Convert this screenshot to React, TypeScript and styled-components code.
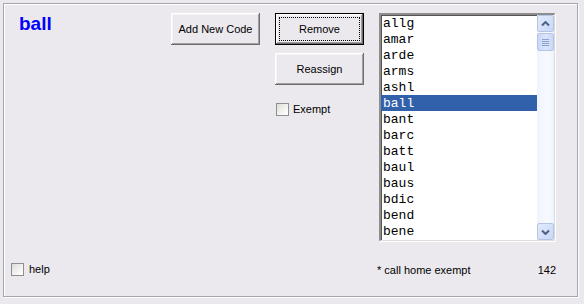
import React from 'react';
import styled, { createGlobalStyle } from 'styled-components';

const codes = [
  'allg', 'amar', 'arde', 'arms', 'ashl', 'ball', 'bant',
  'barc', 'batt', 'baul', 'baus', 'bdic', 'bend', 'bene',
];

const GlobalStyle = createGlobalStyle`
  html, body {
    margin: 0;
    padding: 0;
    background: #ebe9ed;
  }
  body {
    font-family: 'Liberation Sans', Arial, sans-serif;
    font-size: 11px;
    color: #000;
  }
`;

const Page = styled.div`
  width: 584px;
  height: 304px;
  padding: 3px;
  box-sizing: border-box;
  background: #ebe9ed;
`;

const Frame = styled.div`
  width: 575px;
  height: 294px;
  box-sizing: border-box;
  border: 1px solid #a7a6aa;
  box-shadow: inset 1px 1px #fff, 1px 1px #fff;
  padding-top: 9px;
  display: flex;
  flex-direction: column;
`;

const TopRow = styled.div`
  display: flex;
  align-items: flex-start;
`;

const TitleCol = styled.div`
  width: 152px;
  padding-left: 15px;
`;

const Title = styled.div`
  font-family: 'Liberation Sans', Arial, sans-serif;
  font-weight: bold;
  font-size: 19px;
  line-height: 22px;
  color: #0000ff;
`;

const ActionCol = styled.div<{ $gap?: number }>`
  display: flex;
  flex-direction: column;
  width: 89px;
  margin-right: ${({ $gap }) => $gap ?? 15}px;
`;

const Button = styled.button<{ $isDefault?: boolean; $top?: number }>`
  position: relative;
  width: 89px;
  height: 32px;
  margin-top: ${({ $top }) => $top ?? 0}px;
  padding: 0;
  border: ${({ $isDefault }) => ($isDefault ? '1px solid #000' : 'none')};
  background: #ebe9ed;
  font-family: 'Liberation Sans', Arial, sans-serif;
  font-size: 11px;
  color: #000;
  box-shadow: inset -1px -1px #6e6e6e, inset 1px 1px #fff,
    inset -2px -2px #a0a0a0, inset 2px 2px #f4f4f4;
  &::after {
    content: '';
    display: ${({ $isDefault }) => ($isDefault ? 'block' : 'none')};
    position: absolute;
    inset: 3px;
    border: 1px dotted #000;
  }
`;

const CheckRow = styled.label<{ $top?: number; $left?: number; $gap?: number }>`
  display: flex;
  align-items: center;
  gap: ${({ $gap }) => $gap ?? 4}px;
  margin-top: ${({ $top }) => $top ?? 0}px;
  margin-left: ${({ $left }) => $left ?? 0}px;
  font-size: 11px;
  line-height: 13px;
`;

const Box = styled.span`
  width: 13px;
  height: 13px;
  box-sizing: border-box;
  border: 1px solid #8e8f8f;
  background: linear-gradient(135deg, #dcdcd7 0%, #f4f4f2 60%, #fff 100%);
`;

const ListBox = styled.div`
  width: 176px;
  height: 228px;
  box-sizing: border-box;
  display: flex;
  border-top: 2px solid #8d8d8d;
  border-left: 2px solid #8d8d8d;
  border-right: 1px solid #dcdcdc;
  border-bottom: 1px solid #dcdcdc;
  box-shadow: inset 1px 1px #555, 1px 1px #fff;
  background: #fff;
`;

const Items = styled.div`
  flex: 1;
`;

const Item = styled.div<{ $selected?: boolean }>`
  height: 16px;
  line-height: 17px;
  padding-left: 2px;
  font-family: 'Liberation Mono', 'Courier New', monospace;
  font-size: 13px;
  background: ${({ $selected }) => ($selected ? '#3161ab' : 'transparent')};
  color: ${({ $selected }) => ($selected ? '#fff' : '#000')};
`;

const ScrollBar = styled.div`
  width: 17px;
  display: flex;
  flex-direction: column;
  background: linear-gradient(90deg, #eef3fd 0%, #f8faff 60%, #eef3fd 100%);
`;

const ArrowButton = styled.div<{ $down?: boolean }>`
  height: 17px;
  box-sizing: border-box;
  border: 1px solid #b4c4e4;
  border-radius: 2px;
  background: linear-gradient(135deg, #e2ebfd 0%, #c8d7f6 100%);
  display: flex;
  align-items: center;
  justify-content: center;
  margin-top: ${({ $down }) => ($down ? 'auto' : '0')};
`;

const Thumb = styled.div`
  height: 18px;
  box-sizing: border-box;
  margin-top: 1px;
  border: 1px solid #b4c4e4;
  border-radius: 2px;
  background: linear-gradient(90deg, #c9d8f8 0%, #dbe5fb 50%, #c9d8f8 100%);
  display: flex;
  flex-direction: column;
  align-items: center;
  justify-content: center;
  gap: 1px;
`;

const Grip = styled.span`
  width: 7px;
  height: 1px;
  background: #8aa1cf;
`;

const BottomRow = styled.div`
  display: flex;
  align-items: center;
  margin-top: 22px;
  padding-left: 7px;
`;

const Spacer = styled.div`
  flex: 1;
`;

const Footer = styled.div`
  width: 179px;
  margin-right: 21px;
  display: flex;
  justify-content: space-between;
  font-size: 11px;
`;

const Chevron = ({ down }: { down?: boolean }) => (
  <svg width="9" height="6" viewBox="0 0 9 6">
    <path
      d={down ? 'M1 1.5 L4.5 5 L8 1.5' : 'M1 4.5 L4.5 1 L8 4.5'}
      fill="none"
      stroke="#4d6185"
      strokeWidth="2"
    />
  </svg>
);

const App = () => {
  return (
    <Page>
      <GlobalStyle />
      <Frame>
        <TopRow>
          <TitleCol>
            <Title>ball</Title>
          </TitleCol>
          <ActionCol $gap={15}>
            <Button>Add New Code</Button>
          </ActionCol>
          <ActionCol $gap={15}>
            <Button $isDefault>Remove</Button>
            <Button $top={8}>Reassign</Button>
            <CheckRow $top={18} $left={1}>
              <Box />
              Exempt
            </CheckRow>
          </ActionCol>
          <ListBox>
            <Items>
              {codes.map(code => (
                <Item key={code} $selected={code === 'ball'}>
                  {code}
                </Item>
              ))}
            </Items>
            <ScrollBar>
              <ArrowButton>
                <Chevron />
              </ArrowButton>
              <Thumb>
                <Grip />
                <Grip />
                <Grip />
                <Grip />
              </Thumb>
              <ArrowButton $down>
                <Chevron down />
              </ArrowButton>
            </ScrollBar>
          </ListBox>
        </TopRow>
        <BottomRow>
          <CheckRow $gap={5}>
            <Box />
            help
          </CheckRow>
          <Spacer />
          <Footer>
            <span>* call home exempt</span>
            <span>142</span>
          </Footer>
        </BottomRow>
      </Frame>
    </Page>
  );
};

export default App;
